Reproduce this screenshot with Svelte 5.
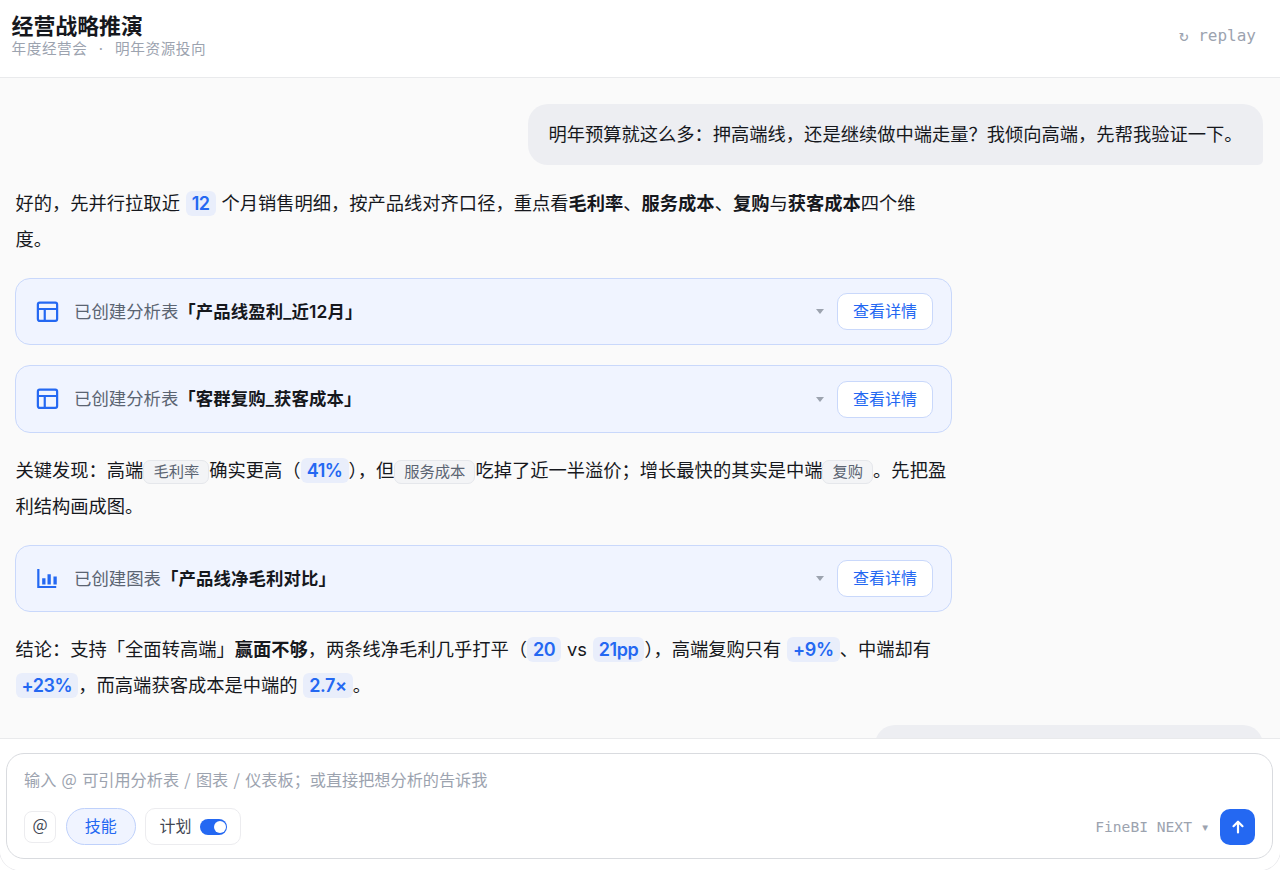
<script lang="ts">
  let planMode = $state(true);
</script>

{#snippet toolCard(kind: string, action: string, name: string)}
  <div class="card">
    <svg class="card-icon" viewBox="0 0 24 24" fill="none" stroke="currentColor" stroke-width="2.4">
      {#if kind === 'table'}
        <rect x="1.5" y="1.7" width="21" height="20" rx="2" />
        <path d="M2 8.7h20M9 8.7v12.5" />
      {:else}
        <path d="M2 1.2V20.7h19.5" />
        <path d="M8 11.2v6.7M13.8 6.7v11.2M20.3 9.2v8.7" stroke-width="3.6" />
      {/if}
    </svg>
    <span class="card-text">{action}<b>「{name}」</b></span>
    <span class="caret"></span>
    <button class="detail">查看详情</button>
  </div>
{/snippet}

<div class="window">
  <header>
    <div>
      <h1>经营战略推演</h1>
      <p class="subtitle">年度经营会 · 明年资源投向</p>
    </div>
    <button class="replay">↻ replay</button>
  </header>

  <main>
    <div class="bubble">明年预算就这么多：押高端线，还是继续做中端走量？我倾向高端，先帮我验证一下。</div>

    <div class="reply">
      <p>好的，先并行拉取近 <span class="num">12</span> 个月销售明细，按产品线对齐口径，重点看<b>毛利率</b>、<b>服务成本</b>、<b>复购</b>与<b>获客成本</b>四个维<br />度。</p>
      {@render toolCard('table', '已创建分析表', '产品线盈利_近12月')}
      {@render toolCard('table', '已创建分析表', '客群复购_获客成本')}
      <p>关键发现：高端<span class="tag">毛利率</span>确实更高（<span class="num">41%</span>），但<span class="tag">服务成本</span>吃掉了近一半溢价；增长最快的其实是中端<span class="tag">复购</span>。先把盈利结构画成图。</p>
      {@render toolCard('chart', '已创建图表', '产品线净毛利对比')}
      <p>结论：支持「全面转高端」<b>赢面不够</b>，两条线净毛利几乎打平（<span class="num">20</span> vs <span class="num">21pp</span>），高端复购只有 <span class="num">+9%</span>、中端却有 <span class="num">+23%</span>，而高端获客成本是中端的 <span class="num">2.7×</span>。</p>
    </div>

    <div class="bubble next"></div>
  </main>

  <footer>
    <div class="composer">
      <div class="placeholder">输入 @ 可引用分析表 / 图表 / 仪表板；或直接把想分析的告诉我</div>
      <div class="tools">
        <button class="mention">@</button>
        <button class="skill">技能</button>
        <button class="plan" onclick={() => (planMode = !planMode)}>
          <span class="plan-label">计划</span>
          <span class="switch" class:on={planMode}></span>
        </button>
        <span class="model">FineBI NEXT <small>▾</small></span>
        <button class="send" aria-label="发送">
          <svg viewBox="0 0 16 16" fill="none" stroke="currentColor" stroke-width="2.2" stroke-linecap="round" stroke-linejoin="round">
            <path d="M8 13.5V3M3.5 7.2 8 2.7l4.5 4.5" />
          </svg>
        </button>
      </div>
    </div>
  </footer>
</div>

<style>
  :global(body) {
    margin: 0;
    background: #fff;
  }

  .window {
    box-sizing: border-box;
    display: flex;
    flex-direction: column;
    height: 870px;
    overflow: hidden;
    border-radius: 0 0 20px 20px;
    background: #fff;
    box-shadow: 0 0 0 1px #ececef;
    color: #16181d;
    font-family: Inter, 'Noto Sans CJK SC', sans-serif;
    font-size: 18.28px;
  }

  button {
    box-sizing: border-box;
    margin: 0;
    padding: 0;
    border: 0;
    background: none;
    font: inherit;
  }

  header {
    box-sizing: border-box;
    display: flex;
    flex: none;
    align-items: center;
    justify-content: space-between;
    height: 78px;
    padding: 0 24px 6px 11.5px;
    border-bottom: 1px solid #e9eaec;
  }

  h1 {
    margin: 0;
    font-size: 21.9px;
    font-weight: 600;
    line-height: 26px;
  }

  .subtitle {
    margin: 0;
    color: #9ca3af;
    font-size: 14.6px;
    line-height: 20px;
    letter-spacing: 0.6px;
    word-spacing: 6.7px;
  }

  .replay {
    color: #9ca3af;
    font-family: 'DejaVu Sans Mono', monospace;
    font-size: 16px;
  }

  main {
    box-sizing: border-box;
    display: flex;
    flex: 1;
    flex-direction: column;
    min-height: 0;
    padding: 26px 17px 0 15px;
    overflow: hidden;
    background: #fafafa;
  }

  .bubble {
    box-sizing: border-box;
    flex: none;
    align-self: flex-end;
    height: 61px;
    padding: 0 20.5px;
    border-radius: 20px 20px 5px 20px;
    background: #edeef2;
    line-height: 60px;
    white-space: nowrap;
  }

  .next {
    width: 388px;
  }

  .reply {
    display: flex;
    flex: none;
    flex-direction: column;
    gap: 20px;
    width: 937px;
    margin: 21px 0;
  }

  p {
    margin: 0;
    line-height: 35.9px;
  }

  .reply p {
    padding-left: 0.5px;
    word-spacing: 0.6px;
  }

  b {
    font-weight: 600;
  }

  .num {
    display: inline-block;
    padding: 0 6px;
    border-radius: 6px;
    background: #e9eefb;
    color: #2468f2;
    font-size: 18px;
    font-weight: 600;
    line-height: 25px;
    letter-spacing: -0.4px;
  }

  .tag {
    display: inline-block;
    padding: 0 9px;
    border: 1px solid #e5e7eb;
    border-radius: 7px;
    background: #f3f4f6;
    color: #5b6472;
    font-size: 15.3px;
    line-height: 22px;
  }

  .card {
    box-sizing: border-box;
    display: flex;
    align-items: center;
    height: 67.6px;
    padding: 0 18px 0 19.5px;
    border: 1px solid #c9d8fb;
    border-radius: 15px;
    background: #f0f4ff;
    font-size: 17.4px;
  }

  .card-icon {
    width: 23px;
    height: 22px;
    color: #2468f2;
  }

  .card-text {
    flex: 1;
    margin-left: 15.5px;
    padding-bottom: 3px;
    color: #5b6472;
  }

  .card-text b {
    color: #16181d;
    letter-spacing: 0.1px;
  }

  .caret {
    margin-right: 13px;
    border: 4.5px solid transparent;
    border-top: 5px solid #9ca3af;
    border-bottom: 0;
  }

  .detail {
    width: 96px;
    height: 37px;
    padding-bottom: 3px;
    border: 1px solid #c9d8fb;
    border-radius: 10px;
    background: #fff;
    color: #2468f2;
    font-size: 16px;
  }

  footer {
    flex: none;
    padding: 14px 7px 11px 6px;
    border-top: 1px solid #e9eaec;
    background: #fff;
  }

  .composer {
    box-sizing: border-box;
    height: 106px;
    padding: 12px 17px 14px;
    border: 1px solid #d9dbdf;
    border-radius: 18px;
  }

  .placeholder {
    color: #9ca3af;
    font-family: 'Noto Sans CJK SC', sans-serif;
    font-size: 16.15px;
    line-height: 26px;
    word-spacing: 1.7px;
  }

  .tools {
    display: flex;
    align-items: center;
    height: 37px;
    margin-top: 16px;
    color: #3f4652;
    font-size: 16px;
  }

  .mention {
    width: 32px;
    height: 32px;
    padding-bottom: 5px;
    border: 1px solid #ececef;
    border-radius: 8px;
    color: #3f4652;
    font-family: 'Noto Sans CJK SC', sans-serif;
    font-size: 16px;
    line-height: 20px;
  }

  .skill {
    width: 69.5px;
    height: 37px;
    margin-left: 10px;
    padding-bottom: 3px;
    border: 1px solid #bfd1fb;
    border-radius: 19px;
    background: #f0f4ff;
    color: #2468f2;
  }

  .plan {
    display: flex;
    align-items: center;
    justify-content: space-between;
    width: 95.5px;
    height: 37px;
    margin-left: 9.5px;
    padding: 0 12.5px 0 13.5px;
    border: 1px solid #ececef;
    border-radius: 10px;
    color: #3f4652;
  }

  .plan-label {
    padding-bottom: 3px;
  }

  .switch {
    display: flex;
    box-sizing: border-box;
    width: 27px;
    height: 16px;
    padding: 2px 1px;
    border-radius: 8px;
    background: #d1d5db;
  }

  .switch::after {
    width: 12px;
    height: 12px;
    border-radius: 50%;
    background: #fff;
    content: '';
  }

  .switch.on {
    justify-content: flex-end;
    background: #2468f2;
  }

  .model {
    margin-left: auto;
    color: #9ca3af;
    font-family: 'DejaVu Sans Mono', monospace;
    font-size: 14.6px;
  }

  .model small {
    font-size: 14.6px;
  }

  .send {
    display: grid;
    place-items: center;
    width: 35px;
    height: 36px;
    margin-left: 10.5px;
    border-radius: 10px;
    background: #2468f2;
    color: #fff;
  }

  .send svg {
    width: 16px;
    height: 16px;
  }
</style>
